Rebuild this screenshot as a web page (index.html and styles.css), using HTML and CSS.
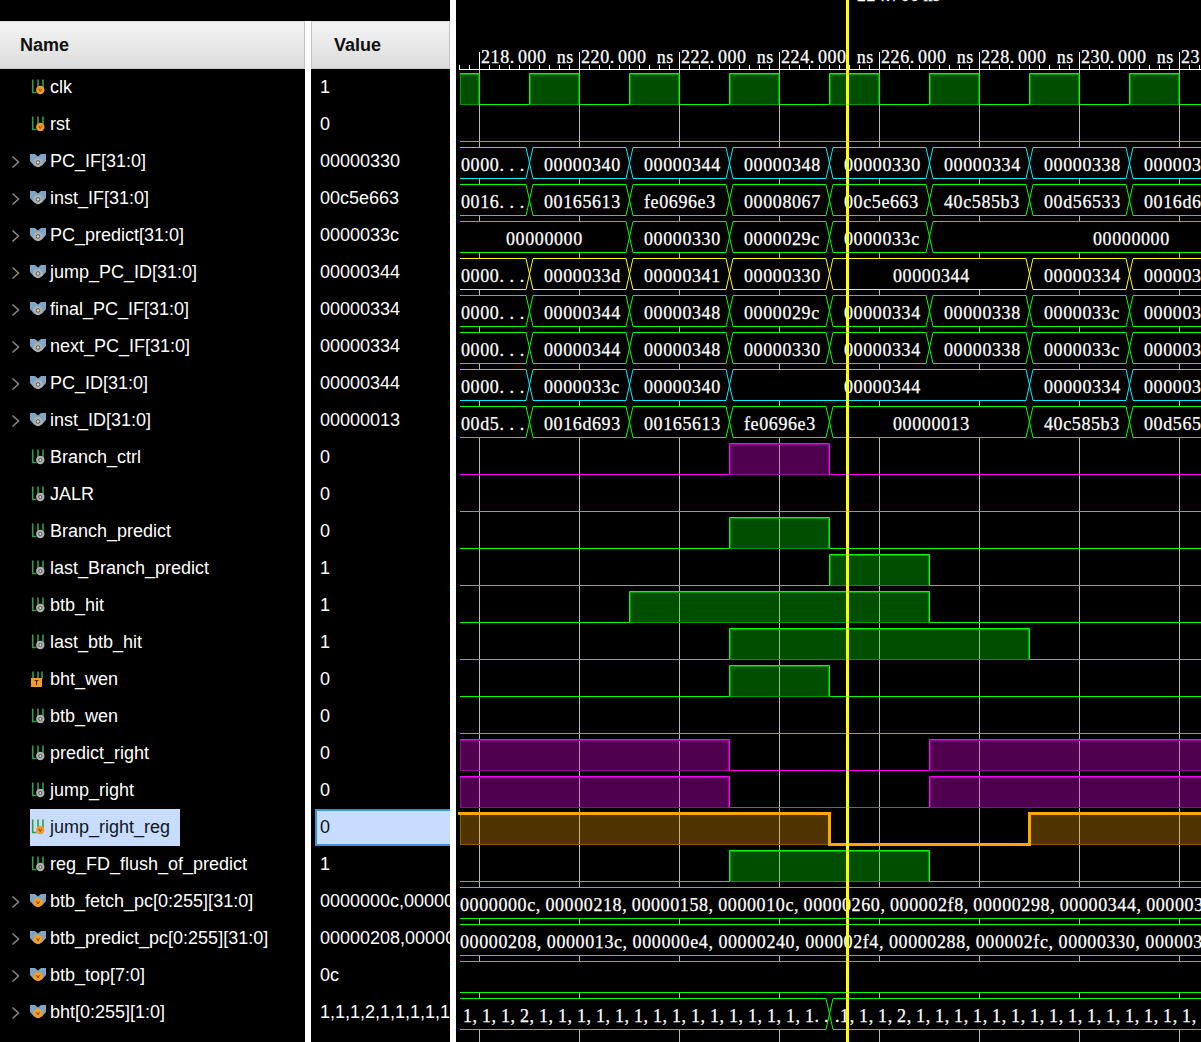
FILE: index.html
```html
<!DOCTYPE html>
<html lang="en">
<head>
<meta charset="utf-8">
<title>Waveform</title>
<link rel="stylesheet" href="styles.css">
</head>
<body>
<svg class="defs" width="0" height="0" aria-hidden="true">
  <defs>
    <g id="bars"><path class="i-bar" d="M2.7 .5V13.5H6.5M8 .5V9M13 .5V9"/></g>
    <symbol id="chev" viewBox="0 0 10 14"><path class="i-chev" d="M1.5 1.5L7.5 7L1.5 12.5"/></symbol>
    <symbol id="s-net" viewBox="0 0 16 18"><use href="#bars"/><circle class="b-grey" cx="10.3" cy="11" r="4.2"/><circle class="b-hole" cx="10.3" cy="11" r="1.6"/></symbol>
    <symbol id="s-reg" viewBox="0 0 16 18"><use href="#bars"/><circle class="b-orange" cx="10.3" cy="11" r="4.2"/><path class="b-v" d="M8.8 9.6L10.3 12.6L11.8 9.6"/></symbol>
    <symbol id="s-wen" viewBox="0 0 16 18"><path class="i-bar" d="M3 .5V8M8 .5V8M12 .5V8"/><rect class="b-orange" x="1" y="7" width="11" height="9"/><path class="b-i" d="M4.5 9.5H8.5M6.5 9.5V14"/></symbol>
    <symbol id="b-net" viewBox="0 0 16 18"><path class="i-bus" d="M0 1H5L8 3.5L11 1H16V8L12 12.5H4L0 8Z"/><circle class="b-grey" cx="8" cy="9.5" r="4.7"/><circle class="b-hole" cx="8" cy="9.5" r="1.8"/></symbol>
    <symbol id="b-reg" viewBox="0 0 16 18"><path class="i-bus" d="M0 1H5L8 3.5L11 1H16V8L12 12.5H4L0 8Z"/><circle class="b-orange" cx="8" cy="9.5" r="4.7"/><path class="b-v" d="M6.5 8L8 11L9.5 8"/></symbol>
    <g id="busA"><rect class="busbg" x="460" width="741" height="32"/><path d="M460 .5H526L533 31.5H626L633 .5H726L733 31.5H826L833 .5H926L933 31.5H1026L1033 .5H1126L1133 31.5H1201M460 31.5H526L533 .5H626L633 31.5H726L733 .5H826L833 31.5H926L933 .5H1026L1033 31.5H1126L1133 .5H1201"/></g>
    <g id="busB"><rect class="busbg" x="460" width="741" height="32"/><path d="M460 .5H626L633 31.5H726L733 .5H826L833 31.5H926L933 .5H1201M460 31.5H626L633 .5H726L733 31.5H826L833 .5H926L933 31.5H1201"/></g>
    <g id="busC"><rect class="busbg" x="460" width="741" height="32"/><path d="M460 .5H526L533 31.5H626L633 .5H726L733 31.5H826L833 .5H1026L1033 31.5H1126L1133 .5H1201M460 31.5H526L533 .5H626L633 31.5H726L733 .5H826L833 31.5H1026L1033 .5H1126L1133 31.5H1201"/></g>
    <g id="busD"><rect class="busbg" x="460" width="741" height="32"/><path d="M460 .5H526L533 31.5H626L633 .5H726L733 31.5H1026L1033 .5H1126L1133 31.5H1201M460 31.5H526L533 .5H626L633 31.5H726L733 .5H1026L1033 31.5H1126L1133 .5H1201"/></g>
    <g id="busE"><rect class="busbg" x="460" width="741" height="32"/><path d="M460 .5H1201M460 31.5H1201"/></g>
    <g id="low"><path d="M460 31.5H1201"/></g>
  </defs>
</svg>
<main class="app">
  <section class="names">
    <header class="head">Name</header>
    <div class="row"><span class="exp"></span><span class="label"><svg class="ico"><use href="#s-reg"/></svg>clk</span></div>
    <div class="row"><span class="exp"></span><span class="label"><svg class="ico"><use href="#s-reg"/></svg>rst</span></div>
    <div class="row"><span class="exp"><svg class="chev"><use href="#chev"/></svg></span><span class="label"><svg class="ico"><use href="#b-net"/></svg>PC_IF[31:0]</span></div>
    <div class="row"><span class="exp"><svg class="chev"><use href="#chev"/></svg></span><span class="label"><svg class="ico"><use href="#b-net"/></svg>inst_IF[31:0]</span></div>
    <div class="row"><span class="exp"><svg class="chev"><use href="#chev"/></svg></span><span class="label"><svg class="ico"><use href="#b-net"/></svg>PC_predict[31:0]</span></div>
    <div class="row"><span class="exp"><svg class="chev"><use href="#chev"/></svg></span><span class="label"><svg class="ico"><use href="#b-net"/></svg>jump_PC_ID[31:0]</span></div>
    <div class="row"><span class="exp"><svg class="chev"><use href="#chev"/></svg></span><span class="label"><svg class="ico"><use href="#b-net"/></svg>final_PC_IF[31:0]</span></div>
    <div class="row"><span class="exp"><svg class="chev"><use href="#chev"/></svg></span><span class="label"><svg class="ico"><use href="#b-net"/></svg>next_PC_IF[31:0]</span></div>
    <div class="row"><span class="exp"><svg class="chev"><use href="#chev"/></svg></span><span class="label"><svg class="ico"><use href="#b-net"/></svg>PC_ID[31:0]</span></div>
    <div class="row"><span class="exp"><svg class="chev"><use href="#chev"/></svg></span><span class="label"><svg class="ico"><use href="#b-net"/></svg>inst_ID[31:0]</span></div>
    <div class="row"><span class="exp"></span><span class="label"><svg class="ico"><use href="#s-net"/></svg>Branch_ctrl</span></div>
    <div class="row"><span class="exp"></span><span class="label"><svg class="ico"><use href="#s-net"/></svg>JALR</span></div>
    <div class="row"><span class="exp"></span><span class="label"><svg class="ico"><use href="#s-net"/></svg>Branch_predict</span></div>
    <div class="row"><span class="exp"></span><span class="label"><svg class="ico"><use href="#s-net"/></svg>last_Branch_predict</span></div>
    <div class="row"><span class="exp"></span><span class="label"><svg class="ico"><use href="#s-net"/></svg>btb_hit</span></div>
    <div class="row"><span class="exp"></span><span class="label"><svg class="ico"><use href="#s-net"/></svg>last_btb_hit</span></div>
    <div class="row"><span class="exp"></span><span class="label"><svg class="ico"><use href="#s-wen"/></svg>bht_wen</span></div>
    <div class="row"><span class="exp"></span><span class="label"><svg class="ico"><use href="#s-net"/></svg>btb_wen</span></div>
    <div class="row"><span class="exp"></span><span class="label"><svg class="ico"><use href="#s-net"/></svg>predict_right</span></div>
    <div class="row"><span class="exp"></span><span class="label"><svg class="ico"><use href="#s-net"/></svg>jump_right</span></div>
    <div class="row"><span class="exp"></span><span class="label selected"><svg class="ico"><use href="#s-reg"/></svg>jump_right_reg</span></div>
    <div class="row"><span class="exp"></span><span class="label"><svg class="ico"><use href="#s-net"/></svg>reg_FD_flush_of_predict</span></div>
    <div class="row"><span class="exp"><svg class="chev"><use href="#chev"/></svg></span><span class="label"><svg class="ico"><use href="#b-reg"/></svg>btb_fetch_pc[0:255][31:0]</span></div>
    <div class="row"><span class="exp"><svg class="chev"><use href="#chev"/></svg></span><span class="label"><svg class="ico"><use href="#b-reg"/></svg>btb_predict_pc[0:255][31:0]</span></div>
    <div class="row"><span class="exp"><svg class="chev"><use href="#chev"/></svg></span><span class="label"><svg class="ico"><use href="#b-reg"/></svg>btb_top[7:0]</span></div>
    <div class="row"><span class="exp"><svg class="chev"><use href="#chev"/></svg></span><span class="label"><svg class="ico"><use href="#b-reg"/></svg>bht[0:255][1:0]</span></div>
  </section>
  <div class="sash sash-low"></div>
  <section class="values">
    <header class="head head-value">Value</header>
    <div class="val">1</div>
    <div class="val">0</div>
    <div class="val">00000330</div>
    <div class="val">00c5e663</div>
    <div class="val">0000033c</div>
    <div class="val">00000344</div>
    <div class="val">00000334</div>
    <div class="val">00000334</div>
    <div class="val">00000344</div>
    <div class="val">00000013</div>
    <div class="val">0</div>
    <div class="val">0</div>
    <div class="val">0</div>
    <div class="val">1</div>
    <div class="val">1</div>
    <div class="val">1</div>
    <div class="val">0</div>
    <div class="val">0</div>
    <div class="val">0</div>
    <div class="val">0</div>
    <div class="val selected">0</div>
    <div class="val">1</div>
    <div class="val">0000000c,00000</div>
    <div class="val">00000208,00000</div>
    <div class="val">0c</div>
    <div class="val">1,1,1,2,1,1,1,1,1</div>
  </section>
  <div class="sash"></div>
  <section class="wave">
    <svg class="wave-svg" viewBox="456 0 745 1042" width="745" height="1042">
      <text class="lbl" x="857" y="1">224.700 ns</text>
      <path class="grid" d="M479.5 70V1042M579.5 70V1042M679.5 70V1042M779.5 70V1042M879.5 70V1042M979.5 70V1042M1079.5 70V1042M1179.5 70V1042"/>
      <path class="rule" d="M459 69.5H1201"/>
      <path class="rule minor" d="M459 67H1201"/>
      <path class="rule" d="M479.5 52V69M579.5 52V69M679.5 52V69M779.5 52V69M879.5 52V69M979.5 52V69M1079.5 52V69M1179.5 52V69"/>
      <g class="ruler-text">
        <text x="481" y="63">218.<tspan dx="3">000 ns</tspan></text><text x="581" y="63">220.<tspan dx="3">000 ns</tspan></text><text x="681" y="63">222.<tspan dx="3">000 ns</tspan></text><text x="781" y="63">224.<tspan dx="3">000 ns</tspan></text><text x="881" y="63">226.<tspan dx="3">000 ns</tspan></text><text x="981" y="63">228.<tspan dx="3">000 ns</tspan></text><text x="1081" y="63">230.<tspan dx="3">000 ns</tspan></text><text x="1181" y="63">23</text>
      </g>

      <g class="w-green" transform="translate(0,73)">
        <rect class="pulse" x="460.5" y="1.5" width="18" height="30"/><rect class="pulse" x="530.5" y="1.5" width="48" height="30"/><rect class="pulse" x="630.5" y="1.5" width="48" height="30"/><rect class="pulse" x="730.5" y="1.5" width="48" height="30"/><rect class="pulse" x="830.5" y="1.5" width="48" height="30"/><rect class="pulse" x="930.5" y="1.5" width="48" height="30"/><rect class="pulse" x="1030.5" y="1.5" width="48" height="30"/><rect class="pulse" x="1130.5" y="1.5" width="48" height="30"/>
        <path d="M460 .5H479.5V31.5H529.5V.5H579.5V31.5H629.5V.5H679.5V31.5H729.5V.5H779.5V31.5H829.5V.5H879.5V31.5H929.5V.5H979.5V31.5H1029.5V.5H1079.5V31.5H1129.5V.5H1179.5V31.5H1201"/>
      </g>
      <g class="w-green" transform="translate(0,110)"><use href="#low"/></g>

      <g class="w-cyan bus" transform="translate(0,147)"><use href="#busA"/>
        <text class="ell" x="461" y="24">0000. . .</text><text x="544" y="24">00000340</text><text x="644" y="24">00000344</text><text x="744" y="24">00000348</text><text x="844" y="24">00000330</text><text x="944" y="24">00000334</text><text x="1044" y="24">00000338</text><text x="1144" y="24">000003</text></g>
      <g class="w-green bus" transform="translate(0,184)"><use href="#busA"/>
        <text class="ell" x="461" y="24">0016. . .</text><text x="544" y="24">00165613</text><text x="644" y="24">fe0696e3</text><text x="744" y="24">00008067</text><text x="844" y="24">00c5e663</text><text x="944" y="24">40c585b3</text><text x="1044" y="24">00d56533</text><text x="1144" y="24">0016d6</text></g>
      <g class="w-green bus" transform="translate(0,221)"><use href="#busB"/>
        <text x="506" y="24">00000000</text><text x="644" y="24">00000330</text><text x="744" y="24">0000029c</text><text x="844" y="24">0000033c</text><text x="1093" y="24">00000000</text></g>
      <g class="w-yellow bus" transform="translate(0,258)"><use href="#busC"/>
        <text class="ell" x="461" y="24">0000. . .</text><text x="544" y="24">0000033d</text><text x="644" y="24">00000341</text><text x="744" y="24">00000330</text><text x="893" y="24">00000344</text><text x="1044" y="24">00000334</text><text x="1144" y="24">000003</text></g>
      <g class="w-green bus" transform="translate(0,295)"><use href="#busA"/>
        <text class="ell" x="461" y="24">0000. . .</text><text x="544" y="24">00000344</text><text x="644" y="24">00000348</text><text x="744" y="24">0000029c</text><text x="844" y="24">00000334</text><text x="944" y="24">00000338</text><text x="1044" y="24">0000033c</text><text x="1144" y="24">000003</text></g>
      <g class="w-green bus" transform="translate(0,332)"><use href="#busA"/>
        <text class="ell" x="461" y="24">0000. . .</text><text x="544" y="24">00000344</text><text x="644" y="24">00000348</text><text x="744" y="24">00000330</text><text x="844" y="24">00000334</text><text x="944" y="24">00000338</text><text x="1044" y="24">0000033c</text><text x="1144" y="24">000003</text></g>
      <g class="w-cyan bus" transform="translate(0,369)"><use href="#busD"/>
        <text class="ell" x="461" y="24">0000. . .</text><text x="544" y="24">0000033c</text><text x="644" y="24">00000340</text><text x="844" y="24">00000344</text><text x="1044" y="24">00000334</text><text x="1144" y="24">000003</text></g>
      <g class="w-green bus" transform="translate(0,406)"><use href="#busC"/>
        <text class="ell" x="461" y="24">00d5. . .</text><text x="544" y="24">0016d693</text><text x="644" y="24">00165613</text><text x="744" y="24">fe0696e3</text><text x="893" y="24">00000013</text><text x="1044" y="24">40c585b3</text><text x="1144" y="24">00d565</text></g>

      <g class="w-magenta" transform="translate(0,443)"><rect class="pulse" x="730.5" y="1.5" width="98" height="30"/><path d="M460 31.5H729.5V.5H829.5V31.5H1201"/></g>
      <g class="w-green" transform="translate(0,480)"><use href="#low"/></g>
      <g class="w-green" transform="translate(0,517)"><rect class="pulse" x="730.5" y="1.5" width="98" height="30"/><path d="M460 31.5H729.5V.5H829.5V31.5H1201"/></g>
      <g class="w-green" transform="translate(0,554)"><rect class="pulse" x="830.5" y="1.5" width="98" height="30"/><path d="M460 31.5H829.5V.5H929.5V31.5H1201"/></g>
      <g class="w-green" transform="translate(0,591)"><rect class="pulse" x="630.5" y="1.5" width="298" height="30"/><path d="M460 31.5H629.5V.5H929.5V31.5H1201"/></g>
      <g class="w-green" transform="translate(0,628)"><rect class="pulse" x="730.5" y="1.5" width="298" height="30"/><path d="M460 31.5H729.5V.5H1029.5V31.5H1201"/></g>
      <g class="w-green" transform="translate(0,665)"><rect class="pulse" x="730.5" y="1.5" width="98" height="30"/><path d="M460 31.5H729.5V.5H829.5V31.5H1201"/></g>
      <g class="w-green" transform="translate(0,702)"><use href="#low"/></g>
      <g class="w-magenta" transform="translate(0,739)"><rect class="pulse" x="460.5" y="1.5" width="268" height="30"/><rect class="pulse" x="930.5" y="1.5" width="272" height="30"/><path d="M460 .5H729.5V31.5H929.5V.5H1201"/></g>
      <g class="w-magenta" transform="translate(0,776)"><rect class="pulse" x="460.5" y="1.5" width="268" height="30"/><rect class="pulse" x="930.5" y="1.5" width="272" height="30"/><path d="M460 .5H729.5V31.5H929.5V.5H1201"/></g>
      <g class="w-orange" transform="translate(0,813)"><rect class="pulse" x="460.5" y="1.5" width="368" height="30"/><rect class="pulse" x="1030.5" y="1.5" width="172" height="30"/><path d="M458 .5H829.5V31.5H1029.5V.5H1201"/></g>
      <g class="w-green" transform="translate(0,850)"><rect class="pulse" x="730.5" y="1.5" width="198" height="30"/><path d="M460 31.5H729.5V.5H929.5V31.5H1201"/></g>

      <g class="w-green bus" transform="translate(0,887)"><use href="#busE"/>
        <text class="list" x="460" y="24">0000000c, 00000218, 00000158, 0000010c, 00000260, 000002f8, 00000298, 00000344, 000003</text></g>
      <g class="w-green bus" transform="translate(0,924)"><use href="#busE"/>
        <text class="list list-wide" x="460" y="24">00000208, 0000013c, 000000e4, 00000240, 000002f4, 00000288, 000002fc, 00000330, 000003</text></g>
      <g class="w-green bus" transform="translate(0,961)"><use href="#busE"/></g>
      <g class="w-green" transform="translate(0,998)"><rect class="busbg" x="460" width="741" height="32"/><path d="M460 .5H826L833 31.5H1201M460 31.5H826L833 .5H1201"/></g>
      <text class="tight" x="463" y="1022">1, 1, 1, 2, 1, 1, 1, 1, 1, 1, 1, 1, 1, 1, 1, 1, 1, 1, 1. .</text>
      <text class="tight" x="835" y="1022">.1, 1, 1, 2, 1, 1, 1, 1, 1, 1, 1, 1, 1, 1, 1, 1, 1, 1, 1,</text>

      <rect class="cursor" x="846" y="0" width="3" height="1042"/>
    </svg>
  </section>
</main>
</body>
</html>
```
FILE: styles.css
```css
* { box-sizing: border-box; }
html, body { margin: 0; padding: 0; background: #000; }
.defs { position: absolute; }
.app {
  display: flex;
  width: 1201px;
  height: 1042px;
  overflow: hidden;
  background: #000;
  font: 18px "Liberation Sans", Arial, sans-serif;
  color: #fff;
}
.names { width: 305px; flex: none; padding-top: 21px; }
.values { width: 139px; flex: none; padding-top: 21px; overflow: hidden; }
.wave { width: 745px; flex: none; }
.sash { width: 6px; flex: none; background: #fff; }
.sash-low { margin-top: 21px; }
.head {
  height: 48px;
  padding-left: 20px;
  display: flex;
  align-items: center;
  font-weight: bold;
  color: #111;
  background: linear-gradient(#f4f4f4, #dcdcdd);
  border-top: 1px solid #d4d4d4;
  border-right: 1px solid #c4c4c4;
  border-bottom: 1px solid #c4c4c4;
}
.head-value { padding-left: 22px; border-left: 1px solid #c4c4c4; }
.row { height: 37px; display: flex; }
.exp { width: 30px; flex: none; padding: 12px 0 0 11px; }
.chev { display: block; width: 10px; height: 14px; }
.label { display: flex; height: 37px; align-items: center; white-space: nowrap; padding-right: 10px; }
.label.selected { background: #c8dcfd; color: #10161c; }
.ico { width: 16px; height: 18px; align-self: flex-start; margin: 10px 4px 0 0; flex: none; }
.val {
  height: 37px;
  line-height: 36px;
  padding-left: 9px;
  white-space: nowrap;
  overflow: hidden;
}
.val.selected {
  margin-left: 4px;
  padding-left: 3px;
  line-height: 33px;
  background: #c8dcff;
  color: #10161c;
  border: 2px solid #3c94d8;
  border-right: 0;
}
.i-bar { fill: none; stroke: #2f9f45; stroke-width: 1.6; }
.i-chev { fill: none; stroke: #8a8a8a; stroke-width: 1.5; }
.i-bus { fill: #7ea6c6; }
.b-grey { fill: #b0b0b0; }
.b-hole { fill: #d8d8d8; stroke: #555; stroke-width: 1; }
.b-orange { fill: #f39c2c; }
.b-v { fill: none; stroke: #8a5200; stroke-width: 1; }
.b-i { fill: none; stroke: #4a3000; stroke-width: 1.2; }

.wave-svg { display: block; font-family: "Liberation Serif", "Times New Roman", serif; }
.wave-svg text {
  font-size: 18px;
  fill: #fff;
  stroke: #fff;
  stroke-width: .25px;
  letter-spacing: .6px;
  word-spacing: -1.4px;
  text-rendering: optimizeSpeed;
}
.wave-svg .ruler-text text { word-spacing: 4.9px; }
.wave-svg .ell { word-spacing: 0; }
.wave-svg .list { word-spacing: -.6px; }
.wave-svg .list-wide { word-spacing: -.2px; }
.wave-svg .tight { word-spacing: -.8px; }
.grid { fill: none; stroke: #b8b8b8; stroke-width: 1; }
.rule { fill: none; stroke: #fff; stroke-width: 1; }
.rule.minor { stroke-width: 4; stroke-dasharray: 1 9; }
.cursor { fill: #ff0; }
.busbg { fill: #000; stroke: none; }
.w-green, .w-cyan, .w-yellow, .w-magenta, .w-orange { fill: none; stroke-width: 1; }
.w-green { stroke: #00ff00; }
.w-cyan { stroke: #00f0ff; }
.w-yellow { stroke: #ffff00; }
.w-magenta { stroke: #ff00ff; }
.w-orange { stroke: #ffa500; stroke-width: 3; }
.pulse { stroke-width: 1; }
.w-green .pulse { fill: rgba(0, 255, 0, .31); stroke: #009a00; }
.w-magenta .pulse { fill: rgba(255, 0, 255, .31); stroke: #9a009a; }
.w-orange .pulse { fill: rgba(255, 165, 0, .31); stroke: #8f5c00; }
```
